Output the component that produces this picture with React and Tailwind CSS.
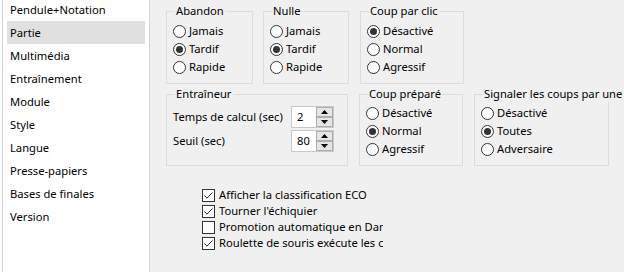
import React from "react";

const pages = [
  "Pendule+Notation",
  "Partie",
  "Multimédia",
  "Entraînement",
  "Module",
  "Style",
  "Langue",
  "Presse-papiers",
  "Bases de finales",
  "Version",
];

function Radio({ label, checked }) {
  return (
    <div className="flex items-center h-[18px] whitespace-nowrap">
      <span className="w-[13px] h-[13px] rounded-full border border-[#333] bg-white flex items-center justify-center shrink-0">
        {checked && <span className="w-[7px] h-[7px] rounded-full bg-[#333]" />}
      </span>
      <span className="ml-[3px]">{label}</span>
    </div>
  );
}

function Check({ label, checked }) {
  return (
    <div className="flex items-center h-[16px] whitespace-nowrap">
      <span className="w-[13px] h-[13px] border border-[#333] bg-white flex items-center justify-center shrink-0">
        {checked && (
          <svg width="11" height="11" viewBox="0 0 11 11">
            <path d="M1.5 5.5 L4 8 L9.5 2.5" fill="none" stroke="#333" strokeWidth="1" />
          </svg>
        )}
      </span>
      <span className="ml-[4px]">{label}</span>
    </div>
  );
}

function Group({ title, className, children }) {
  return (
    <fieldset className={"border border-[#dcdcdc] px-[6px] min-w-0 " + className}>
      <legend className="ml-[2px] px-[1px] h-[16px] leading-[16px] whitespace-nowrap">{title}</legend>
      {children}
    </fieldset>
  );
}

function Spin({ value }) {
  return (
    <div className="w-[43px] h-[22px] bg-white border border-[#c8c8c8] flex">
      <span className="flex-1 pl-[5px] leading-[20px]">{value}</span>
      <div className="w-[17px] flex flex-col">
        <button className="h-[10px] border border-[#adadad] bg-[#e5e5e5] flex items-center justify-center">
          <svg width="7" height="4" viewBox="0 0 7 4"><path d="M0 4 L3.5 0 L7 4 Z" fill="#000" /></svg>
        </button>
        <button className="h-[10px] border border-[#adadad] bg-[#e5e5e5] flex items-center justify-center">
          <svg width="7" height="4" viewBox="0 0 7 4"><path d="M0 0 L3.5 4 L7 0 Z" fill="#000" /></svg>
        </button>
      </div>
    </div>
  );
}

export default function App() {
  return (
    <div
      className="w-[624px] h-[272px] flex bg-[#f0f0f0] text-[11.2px] text-black overflow-hidden"
      style={{ fontFamily: '"Noto Sans", sans-serif' }}
    >
      {/* liste des pages */}
      <div className="w-[2px] bg-white shrink-0" />
      <div className="w-[148px] shrink-0 bg-white border-l border-r border-[#d4d4d4] px-[4px] -mt-[2px] h-[276px]">
        {pages.map((p) => (
          <div
            key={p}
            className={
              "h-[23px] leading-[23px] pl-[3px] " + (p === "Partie" ? "bg-[#e0e0e0]" : "")
            }
          >
            {p}
          </div>
        ))}
      </div>

      {/* options de la partie */}
      <div className="flex-1 pl-[16px] pt-[3px]">
        <div className="flex">
          <Group title="Abandon" className="w-[87px] h-[81px] pt-[3px]">
            <Radio label="Jamais" />
            <Radio label="Tardif" checked />
            <Radio label="Rapide" />
          </Group>
          <Group title="Nulle" className="w-[86px] h-[81px] pt-[3px] ml-[10px]">
            <Radio label="Jamais" />
            <Radio label="Tardif" checked />
            <Radio label="Rapide" />
          </Group>
          <Group title="Coup par clic" className="w-[104px] h-[81px] pt-[3px] ml-[11px]">
            <Radio label="Désactivé" checked />
            <Radio label="Normal" />
            <Radio label="Agressif" />
          </Group>
        </div>

        <div className="flex mt-[2px]">
          <Group title="Entraîneur" className="w-[182px] h-[80px] pt-[3px]">
            <div className="flex items-center justify-between h-[24px] pr-[7px]">
              <span>Temps de calcul (sec)</span>
              <Spin value="2" />
            </div>
            <div className="flex items-center justify-between h-[24px] pr-[7px]">
              <span>Seuil (sec)</span>
              <Spin value="80" />
            </div>
          </Group>
          <Group title="Coup préparé" className="w-[104px] h-[80px] pt-[2px] ml-[11px]">
            <Radio label="Désactivé" />
            <Radio label="Normal" checked />
            <Radio label="Agressif" />
          </Group>
          <Group title="Signaler les coups par une" className="w-[135px] h-[80px] pt-[2px] ml-[11px]">
            <Radio label="Désactivé" />
            <Radio label="Toutes" checked />
            <Radio label="Adversaire" />
          </Group>
        </div>

        <div className="ml-[36px] mt-[21px] w-[181px] overflow-hidden">
          <Check label="Afficher la classification ECO" checked />
          <Check label="Tourner l'échiquier" checked />
          <Check label="Promotion automatique en Dame" />
          <Check label="Roulette de souris exécute les coups" checked />
        </div>
      </div>
    </div>
  );
}
